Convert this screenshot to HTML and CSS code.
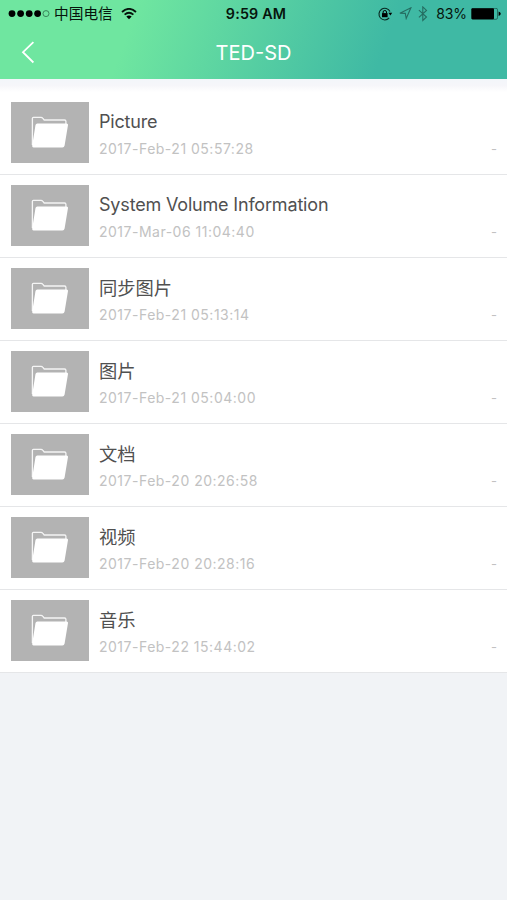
FILE: index.html
```
<!DOCTYPE html>
<html lang="zh-CN">
<head>
  <meta charset="UTF-8">
  <meta name="viewport" content="width=device-width, initial-scale=1.0">
  <title>TED-SD</title>
  <link rel="stylesheet" href="styles.css">
</head>
<body>
  <svg class="defs" width="0" height="0">
    <symbol id="folder" viewBox="0 0 38 34">
      <path d="M1.4 29 V2.2 Q1.4 1.3 2.4 1.3 H10 Q11 1.3 11.7 2.2 L13.2 4 H33.5 Q34.9 4 34.9 5.2 V8" fill="none" stroke="#f5f5f5" stroke-width="1.3"/>
      <path d="M6.3 7.6 H35.6 Q37.3 7.6 37 9.1 L33.6 29.5 Q33.2 31.4 31.4 31.4 H2.5 Q.9 31.4 1.2 29.5 L4.5 9.1 Q4.8 7.6 6.3 7.6Z" fill="#fff"/>
    </symbol>
  </svg>

  <header class="header">
    <div class="status-bar">
      <div class="status-left">
        <svg class="signal" width="42" height="8" viewBox="0 0 42 8">
          <circle cx="4" cy="3.6" r="3.4"/>
          <circle cx="12.6" cy="3.6" r="3.4"/>
          <circle cx="21.2" cy="3.6" r="3.4"/>
          <circle cx="29.6" cy="3.6" r="3.4"/>
          <circle cx="38" cy="3.6" r="3" fill="none" stroke="#2c6d4a" stroke-width=".8"/>
        </svg>
        <span class="carrier">中国电信</span>
        <svg class="wifi" width="16" height="12" viewBox="0 0 16 12">
          <g fill="none" stroke="#06140c" stroke-width="1.8">
            <path d="M1 4 Q8 -2.3 15 4"/>
            <path d="M3.6 6.7 Q8 2.8 12.4 6.7"/>
          </g>
          <path d="M5.3 8.5 Q8 6.4 10.7 8.5 L8 11.3Z"/>
        </svg>
      </div>
      <div class="time">9:59 AM</div>
      <div class="status-right">
        <svg class="lock" width="15" height="14" viewBox="0 0 15 14">
          <path d="M11.2 10.9 A5.8 5.8 0 1 1 12 4.6" fill="none" stroke="#08271f" stroke-width="1.1"/>
          <path d="M10.4 5.8 H14.2 L12.4 8.6Z"/>
          <rect x="4" y="6.1" width="5.6" height="4.1"/>
          <path d="M5.1 6.3 V5 Q5.1 3.5 6.8 3.5 Q8.5 3.5 8.5 5 V6.3" fill="none" stroke="#000" stroke-width="1"/>
        </svg>
        <svg class="location" width="13" height="13" viewBox="0 0 13 13">
          <path d="M.9 6.2 L11.9 .8 L7.2 11.5 L6.3 6.4Z" fill="none" stroke="#246c60" stroke-width="1.1"/>
        </svg>
        <svg class="bluetooth" width="10" height="16" viewBox="0 0 10 16">
          <path d="M.9 4.1 L8.5 11 L4.8 14.5 V.9 L8.5 4.4 L.9 11.3" fill="none" stroke="#246c60" stroke-width="1.1"/>
        </svg>
        <span class="percent">83%</span>
        <svg class="battery" width="30" height="12" viewBox="0 0 30 12">
          <rect x=".5" y=".3" width="26" height="11" rx="1.5" fill="none" stroke="#1c5d50" stroke-width=".8"/>
          <rect x=".5" y=".3" width="22.5" height="11" rx="1"/>
          <path d="M27.6 3.5 Q29.8 4.3 29.8 5.7 Q29.8 7.1 27.6 7.9Z"/>
        </svg>
      </div>
    </div>
    <div class="nav-bar">
      <svg class="back" width="14" height="24" viewBox="0 0 14 24">
        <path d="M12.4 1.2 L2 11.2 L12.4 21.5" fill="none" stroke="#fff" stroke-width="1.8"/>
      </svg>
      <h1>TED-SD</h1>
    </div>
  </header>

  <div class="shade"></div>

  <ul class="file-list">
    <li class="file">
      <div class="thumb"><svg class="folder"><use href="#folder"/></svg></div>
      <div class="info">
        <div class="name">Picture</div>
        <div class="date">2017-Feb-21 05:57:28</div>
      </div>
      <div class="size">-</div>
    </li>
    <li class="file">
      <div class="thumb"><svg class="folder"><use href="#folder"/></svg></div>
      <div class="info">
        <div class="name">System Volume Information</div>
        <div class="date">2017-Mar-06 11:04:40</div>
      </div>
      <div class="size">-</div>
    </li>
    <li class="file">
      <div class="thumb"><svg class="folder"><use href="#folder"/></svg></div>
      <div class="info">
        <div class="name cjk">同步图片</div>
        <div class="date">2017-Feb-21 05:13:14</div>
      </div>
      <div class="size">-</div>
    </li>
    <li class="file">
      <div class="thumb"><svg class="folder"><use href="#folder"/></svg></div>
      <div class="info">
        <div class="name cjk">图片</div>
        <div class="date">2017-Feb-21 05:04:00</div>
      </div>
      <div class="size">-</div>
    </li>
    <li class="file">
      <div class="thumb"><svg class="folder"><use href="#folder"/></svg></div>
      <div class="info">
        <div class="name cjk">文档</div>
        <div class="date">2017-Feb-20 20:26:58</div>
      </div>
      <div class="size">-</div>
    </li>
    <li class="file">
      <div class="thumb"><svg class="folder"><use href="#folder"/></svg></div>
      <div class="info">
        <div class="name cjk">视频</div>
        <div class="date">2017-Feb-20 20:28:16</div>
      </div>
      <div class="size">-</div>
    </li>
    <li class="file">
      <div class="thumb"><svg class="folder"><use href="#folder"/></svg></div>
      <div class="info">
        <div class="name cjk">音乐</div>
        <div class="date">2017-Feb-22 15:44:02</div>
      </div>
      <div class="size">-</div>
    </li>
  </ul>
</body>
</html>
```
FILE: styles.css
```
* {
  box-sizing: border-box;
}
body {
  margin: 0;
  min-height: 900px;
  background-color: #f1f3f6;
  font-family: Inter, "Noto Sans CJK SC", sans-serif;
}
svg {
  display: block;
  flex: none;
}
.defs {
  position: absolute;
}
.header {
  height: 79px;
  background: linear-gradient(110deg, #6fe6a0 26%, #3fb9a4 75%);
}
.status-bar {
  display: grid;
  grid-template-columns: 1fr auto 1fr;
  align-items: center;
  height: 27px;
  padding: 0 6px 0 8px;
  color: #06140c;
}
.status-left, .status-right {
  display: flex;
  align-items: center;
}
.status-right {
  justify-content: flex-end;
}
.carrier {
  margin-left: 4px;
  font-size: 14.7px;
  line-height: 20px;
}
.wifi {
  margin-left: 8px;
}
.time {
  padding-left: 3px;
  font-size: 14.3px;
  font-weight: 600;
  letter-spacing: 0.2px;
}
.location {
  margin-left: 6px;
}
.bluetooth {
  margin-left: 6px;
}
.percent {
  margin: 0 4px 0 8px;
  font-size: 14px;
  letter-spacing: -0.1px;
}
.nav-bar {
  display: grid;
  grid-template-columns: 36px 1fr 36px;
  align-items: center;
  height: 52px;
}
.back {
  margin-left: 21px;
}
h1 {
  margin: 0;
  color: #fff;
  font-size: 20px;
  font-weight: 400;
  text-align: center;
}
.shade {
  height: 13px;
  background: linear-gradient(#f3f6fa, #f6f6fa 50%, #fff);
}
.file-list {
  margin: 0;
  padding: 0;
  list-style: none;
}
.file {
  display: flex;
  height: 83px;
  padding: 10px 10px 0 11px;
  background-color: #fff;
  border-bottom: 1px solid #e5e6e8;
}
.thumb {
  display: flex;
  justify-content: center;
  align-items: center;
  width: 78px;
  height: 61px;
  background-color: #b3b3b3;
}
.folder {
  width: 38px;
  height: 34px;
}
.info {
  flex: 1;
  padding: 1px 0 0 10px;
}
.name {
  height: 36px;
  color: #505050;
  font-size: 18px;
  letter-spacing: -0.18px;
  line-height: 38px;
}
.name.cjk {
  font-size: 18.3px;
  letter-spacing: 0;
}
.date {
  color: #c2c2c2;
  font-size: 14px;
  letter-spacing: 0.5px;
  line-height: 20px;
}
.size {
  padding-top: 37px;
  color: #c2c2c2;
  font-size: 13px;
  line-height: 20px;
}
```
